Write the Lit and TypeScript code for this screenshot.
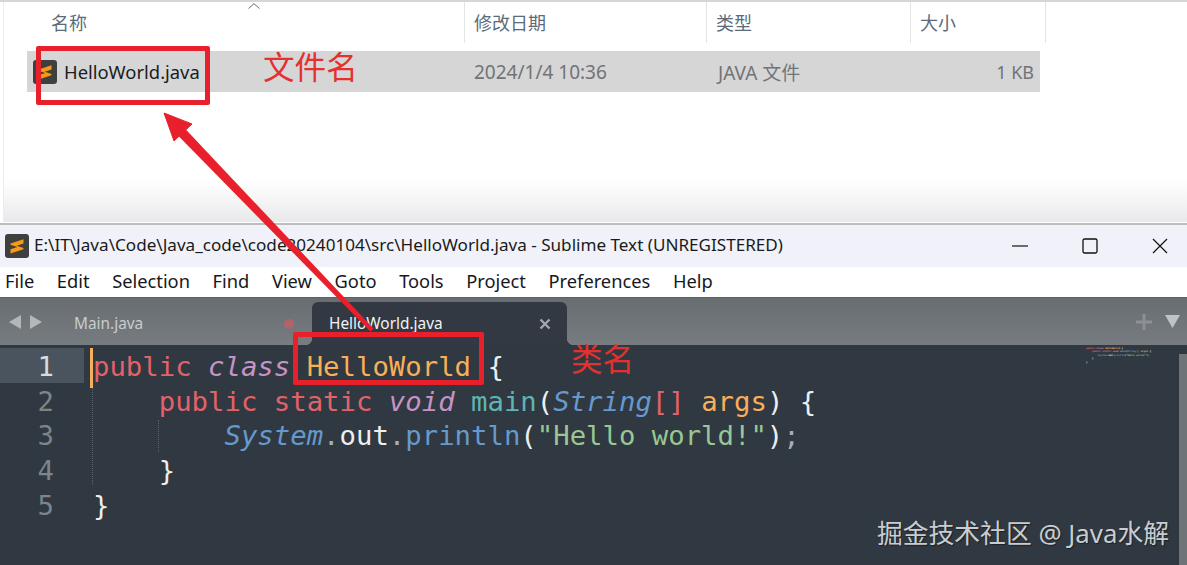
import { LitElement, html, css, svg } from "lit";
import { customElement } from "lit/decorators.js";

type Seg = [string, string];
const CODE: { indent: number; segs: Seg[] }[] = [
  { indent: 0, segs: [["public", "kw"], [" ", ""], ["class", "it"], [" ", ""], ["HelloWorld", "cl"], [" {", "wh"]] },
  { indent: 4, segs: [["public", "kw"], [" ", ""], ["static", "kw"], [" ", ""], ["void", "it"], [" ", ""], ["main", "fn"], ["(", "wh"], ["String", "ty"], ["[]", "kw"], [" ", ""], ["args", "cl"], [")", "wh"], [" {", "wh"]] },
  { indent: 8, segs: [["System", "ty"], [".", "pu"], ["out", "wh"], [".", "pu"], ["println", "bl"], ["(", "wh"], ['"Hello world!"', "st"], [")", "wh"], [";", "pu"]] },
  { indent: 4, segs: [["}", "wh"]] },
  { indent: 0, segs: [["}", "wh"]] },
];
const MENU = ["File", "Edit", "Selection", "Find", "View", "Goto", "Tools", "Project", "Preferences", "Help"];

const logo = (cls: string) => html`<svg class=${cls} viewBox="0 0 24 24">
  <rect width="24" height="24" rx="3" fill="#3f3f3f"></rect>
  <path d="M5.5 9.6 18.5 5.2v4.3l-6.8 2.3 6.8 2.3v1.2L5.5 19.6v-4.3l6.8-2.3-6.8-2.3z" fill="#f59a12"></path>
</svg>`;

@customElement("app-root")
export class AppRoot extends LitElement {
  static styles = css`
    :host { display: block; position: relative; width: 1187px; height: 565px; overflow: hidden; background: #fff;
      font-family: "Noto Sans", "Noto Sans CJK SC", sans-serif; }
    .page { display: flex; flex-direction: column; height: 565px; }
    .explorer { height: 222px; box-sizing: border-box; border-top: 2px solid #d6d6d6; flex: none;
      background: linear-gradient(#fff 0, #fff 178px, #e9e9ec 220px); box-shadow: inset 3px 0 0 #fff, inset 4px 0 0 #ececec; }
    .cols { display: grid; grid-template-columns: 462px 242px 204px 135px; height: 41px; position: relative; }
    .col { font-size: 18px; color: #5c6b7a; border-right: 1px solid #e4e4e4; padding: 7px 0 0 9px; box-sizing: border-box; line-height: 28px; }
    .col.first { padding-left: 48px; position: relative; }
    .chev { position: absolute; left: 245px; top: 1px; width: 12px; height: 6px; }
    .colwrap { padding-left: 3px; }
    .row { margin: 8px 0 0 27px; width: 1013px; height: 41px; background: #d6d6d6; display: grid;
      grid-template-columns: 438px 243px 202px 124px; align-items: center; font-size: 19px; color: #707478; }
    .name { display: flex; align-items: center; gap: 7px; padding-left: 6px; color: #1a1d22; font-size: 18.4px; }
    .ficon { width: 24px; height: 24px; flex: none; }
    .date { padding-left: 9px; } .type { padding-left: 10px; } .size { text-align: right; font-size: 18px; }
    .title { height: 44px; margin-top: 1px; flex: none; background: #f1f2f9; border-top: 2px solid #bcbcbc; box-sizing: border-box; display: flex; align-items: center; padding-left: 5px; gap: 5px;
      font-size: 17.1px; color: #1a1a1a; }
    .title .path { position: relative; top: -2px; }
    .title svg.tic { width: 24px; height: 24px; flex: none; }
    .wc { margin-left: auto; display: flex; gap: 54px; padding-right: 19px; align-items: center; }
    .wc svg { width: 16px; height: 16px; display: block; }
    .menu { height: 30px; flex: none; background: #fff; display: flex; align-items: center; gap: 22.6px; padding: 0 0 4px 5px; box-sizing: border-box; font-size: 18.3px; color: #16181c; }
    .tabs { height: 48px; flex: none; background: linear-gradient(#686d72, #777c80); border-top: 1px solid #5d6166; box-sizing: border-box; display: flex; position: relative; }
    .arrows { width: 74px; flex: none; display: flex; align-items: center; gap: 9px; padding-left: 9px; box-sizing: border-box; }
    .arrows svg { width: 12px; height: 14px; }
    .tab { height: 43px; align-self: flex-end; box-sizing: border-box; display: flex; align-items: center; font-size: 15.4px; }
    .tab.off { width: 238px; color: #c8cbcd; }
    .dot { width: 10px; height: 10px; border-radius: 50%; background: #b1636a; margin-left: auto; margin-right: 18px; }
    .tab.on { width: 255px; background: #323943; border-radius: 6px 6px 0 0; padding: 0 16px 0 17px; color: #f2f3f4; position: relative; }
    .tab.on::before, .tab.on::after { content: ""; position: absolute; bottom: 0; width: 7px; height: 7px; }
    .tab.on::before { right: 100%; background: radial-gradient(circle at 0 0, transparent 7px, #323943 7.5px); }
    .tab.on::after { left: 100%; background: radial-gradient(circle at 100% 0, transparent 7px, #323943 7.5px); }
    .tab.on .x { margin-left: auto; width: 12px; height: 12px; }
    .tabr { margin-left: auto; display: flex; align-items: center; gap: 13px; padding-right: 7px; }
    .tabr svg { display: block; }
    .editor { flex: 1; background: #303841; position: relative; display: flex; padding-top: 3px; box-sizing: border-box;
      font-family: "DejaVu Sans Mono", monospace; font-size: 27.3px; }
    .gutter { width: 84px; flex: none; }
    .ln { height: 34.7px; line-height: 38.4px; text-align: right; padding-right: 30px; box-sizing: border-box; color: #7d848a; }
    .ln.cur { background: #4a545e; color: #d8dbdd; }
    .lines { padding-left: 9px; position: relative; }
    .line { height: 34.7px; line-height: 38.4px; white-space: pre; color: #d8dee9; }
    .caret { position: absolute; left: 6px; top: 0; width: 3px; height: 40px; background: #f9ae58; }
    .guide { position: absolute; width: 0; border-left: 1px dotted #59626b; }
    .g1 { left: 8px; top: 40px; height: 97px; }
    .g2 { left: 74px; top: 72px; height: 32px; }
    .kw { color: #e2626a; } .it { color: #c594c5; font-style: italic; } .cl { color: #f9ae58; } .wh { color: #eceef0; }
    .fn { color: #5fb4b4; } .ty { color: #6699cc; font-style: italic; } .bl { color: #6699cc; } .st { color: #99c794; } .pu { color: #a6acb9; }
    .mini { position: absolute; left: 1086px; top: 2px; font-size: 2.46px; font-weight: 700; }
    .mini .line { height: 3.4px; line-height: 3.4px; }
    .scroll { position: absolute; right: 0; top: 9px; bottom: 0; width: 8px; background: #6f7479; }
    .mark { position: absolute; z-index: 2; box-sizing: border-box; border: 5px solid #e8202c; border-radius: 2px; }
    .m1 { left: 36px; top: 46px; width: 174px; height: 59px; }
    .m2 { left: 293px; top: 332px; width: 191px; height: 53px; }
    .note { position: absolute; z-index: 2; color: #e3312f; font-size: 31.6px; line-height: 34px; font-family: "Noto Sans CJK SC", sans-serif; }
    .n1 { left: 263px; top: 48px; }
    .n2 { left: 571px; top: 340px; }
    .arrow { position: absolute; left: 0; top: 0; width: 1187px; height: 565px; z-index: 1; pointer-events: none; }
    .wm { position: absolute; z-index: 3; right: 18px; bottom: 16px; font-size: 25.8px; line-height: 32px; color: #c9cdd0; text-shadow: 1px 1px 1px #1c2127;
      font-family: "Noto Sans", "Noto Sans CJK SC", sans-serif; white-space: pre; }
  `;

  private renderLine(l: { indent: number; segs: Seg[] }) {
    return html`<div class="line">${" ".repeat(l.indent)}${l.segs.map(([t, c]) => html`<span class=${c}>${t}</span>`)}</div>`;
  }

  render() {
    return html`
      <div class="page">
        <section class="explorer">
          <div class="colwrap"><div class="cols">
            <div class="col first">名称<svg class="chev" viewBox="0 0 12 6"><path d="M.5 5.5 6 .7l5.5 4.8" fill="none" stroke="#6d6d6d" stroke-width="1"></path></svg></div>
            <div class="col">修改日期</div>
            <div class="col">类型</div>
            <div class="col">大小</div>
          </div></div>
          <div class="row">
            <div class="name">${logo("ficon")}<span>HelloWorld.java</span></div>
            <div class="date">2024/1/4 10:36</div>
            <div class="type">JAVA 文件</div>
            <div class="size">1 KB</div>
          </div>
        </section>
        <header class="title">
          ${logo("tic")}
          <span class="path">E:\\IT\\Java\\Code\\Java_code\\code20240104\\src\\HelloWorld.java - Sublime Text (UNREGISTERED)</span>
          <div class="wc">
            <svg viewBox="0 0 16 16"><path d="M0 8h16" stroke="#111" stroke-width="1.2"></path></svg>
            <svg viewBox="0 0 16 16"><rect x="1" y="1" width="14" height="14" rx="1.5" fill="none" stroke="#111" stroke-width="1.3"></rect></svg>
            <svg viewBox="0 0 16 16"><path d="M1 1l14 14M15 1 1 15" stroke="#111" stroke-width="1.2"></path></svg>
          </div>
        </header>
        <nav class="menu">${MENU.map((m) => html`<span>${m}</span>`)}</nav>
        <div class="tabs">
          <div class="arrows">
            <svg viewBox="0 0 12 14"><path d="M12 0v14L0 7z" fill="#b4b7ba"></path></svg>
            <svg viewBox="0 0 12 14"><path d="M0 0v14l12-7z" fill="#b4b7ba"></path></svg>
          </div>
          <div class="tab off">Main.java<span class="dot"></span></div>
          <div class="tab on">HelloWorld.java
            <svg class="x" viewBox="0 0 12 12"><path d="M1.5 1.5l9 9M10.5 1.5l-9 9" stroke="#a3a7ab" stroke-width="2.4"></path></svg>
          </div>
          <div class="tabr">
            <svg width="16" height="16" viewBox="0 0 16 16"><path d="M8 0v16M0 8h16" stroke="#8c9094" stroke-width="3"></path></svg>
            <svg width="15" height="13" viewBox="0 0 15 13"><path d="M0 0h15L7.5 13z" fill="#c0c3c5"></path></svg>
          </div>
        </div>
        <main class="editor">
          <div class="gutter">
            ${CODE.map((_, i) => html`<div class="ln ${i === 0 ? "cur" : ""}">${i + 1}</div>`)}
          </div>
          <div class="lines">
            <div class="caret"></div>
            <div class="guide g1"></div>
            <div class="guide g2"></div>
            ${CODE.map((l) => this.renderLine(l))}
          </div>
          <div class="mini">${CODE.map((l) => this.renderLine(l))}</div>
          <div class="scroll"></div>
        </main>
      </div>
      <div class="mark m1"></div>
      <div class="mark m2"></div>
      <div class="note n1">文件名</div>
      <div class="note n2">类名</div>
      ${html`<svg class="arrow" viewBox="0 0 1187 565">${svg`
        <path d="M373.6 328.6 370.4 331.4 176.5 134 183.5 127z" fill="#e8202c"></path>
        <path d="M164 113 192 124 174 141z" fill="#e8202c" stroke="#e8202c" stroke-width="1" stroke-linejoin="round"></path>
      `}</svg>`}
      <div class="wm">掘金技术社区 @ Java水解</div>
    `;
  }
}
